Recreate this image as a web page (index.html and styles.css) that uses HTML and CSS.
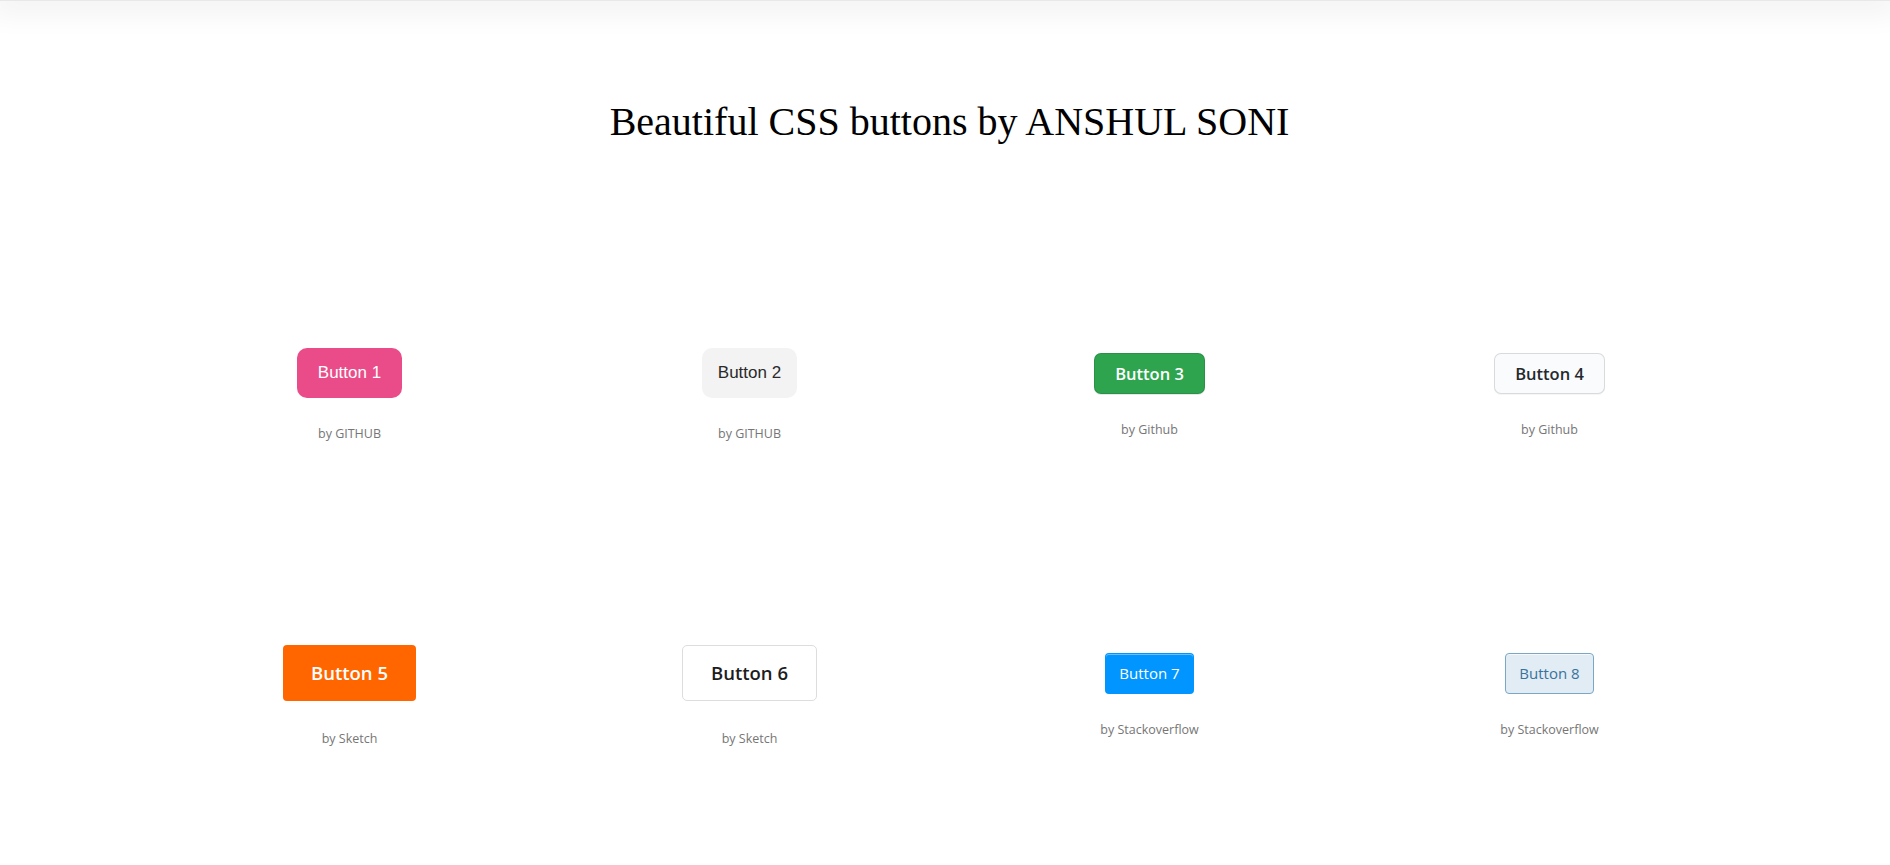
FILE: index.html
```html
<!DOCTYPE html>
<html lang="en">
<head>
<meta charset="utf-8">
<title>Beautiful CSS buttons</title>
<link rel="stylesheet" href="styles.css">
</head>
<body>
<div class="topbar"></div>
<div class="page">
  <h1 class="title">Beautiful CSS buttons by ANSHUL SONI</h1>
  <div class="grid">
    <div class="cell">
      <div class="stage"><button class="btn btn-1">Button 1</button></div>
      <p class="by by-gh-upper">by GITHUB</p>
    </div>
    <div class="cell">
      <div class="stage"><button class="btn btn-2">Button 2</button></div>
      <p class="by by-gh-upper">by GITHUB</p>
    </div>
    <div class="cell">
      <div class="stage"><button class="btn btn-3">Button 3</button></div>
      <p class="by by-gh">by Github</p>
    </div>
    <div class="cell">
      <div class="stage"><button class="btn btn-4">Button 4</button></div>
      <p class="by by-gh">by Github</p>
    </div>
    <div class="cell">
      <div class="stage"><button class="btn btn-5">Button 5</button></div>
      <p class="by by-sketch">by Sketch</p>
    </div>
    <div class="cell">
      <div class="stage"><button class="btn btn-6">Button 6</button></div>
      <p class="by by-sketch">by Sketch</p>
    </div>
    <div class="cell">
      <div class="stage"><button class="btn btn-7">Button 7</button></div>
      <p class="by by-so">by Stackoverflow</p>
    </div>
    <div class="cell">
      <div class="stage"><button class="btn btn-8">Button 8</button></div>
      <p class="by by-so">by Stackoverflow</p>
    </div>
  </div>
</div>
</body>
</html>
```
FILE: styles.css
```css
* { box-sizing: border-box; }

html, body {
  margin: 0;
  padding: 0;
  background: #ffffff;
}

.topbar {
  height: 1px;
  background: #e8e8e8;
  box-shadow: 0 0 30px 10px rgba(0, 0, 0, 0.07);
}

.page {
  padding-left: 9px;
}

.title {
  margin: 99px 0 0;
  font-family: "Liberation Serif", "Times New Roman", serif;
  font-weight: 400;
  font-size: 40px;
  line-height: 44px;
  text-align: center;
  color: #000;
}

.grid {
  display: grid;
  grid-template-columns: repeat(4, 400px);
  grid-template-rows: 300px auto;
  justify-content: center;
  margin-top: 199px;
}

.cell {
  display: flex;
  flex-direction: column;
  align-items: center;
}

.stage {
  height: 60px;
  display: flex;
  align-items: center;
  justify-content: center;
}

.by {
  margin: 0;
  font-family: "Open Sans", "Noto Sans", sans-serif;
  font-size: 12.5px;
  line-height: 20px;
  color: #767676;
}

.by-gh-upper { margin-top: 21px; }
.by-gh { margin-top: 17px; }
.by-sketch { margin-top: 26px; }
.by-so { margin-top: 17px; }

.btn {
  margin: 0;
  border: 0;
  cursor: pointer;
  display: inline-block;
  white-space: nowrap;
}

/* Dribbble-ish pink */
.btn-1 {
  background: #ea4c89;
  color: #ffffff;
  font-family: "Liberation Sans", Arial, sans-serif;
  font-size: 17px;
  line-height: 26px;
  padding: 12px 21px;
  border-radius: 10px;
}

.btn-2 {
  background: #f3f3f4;
  color: #2a2a2a;
  font-family: "Liberation Sans", Arial, sans-serif;
  font-size: 17px;
  line-height: 26px;
  padding: 12px 16px;
  border-radius: 10px;
}

/* GitHub primary */
.btn-3 {
  background: #2ea44f;
  color: #ffffff;
  border: 1px solid rgba(27, 31, 35, 0.15);
  font-family: "Open Sans", "Noto Sans", sans-serif;
  font-weight: 600;
  font-size: 16.5px;
  line-height: 25px;
  padding: 7px 20px;
  border-radius: 7px;
  box-shadow: 0 1px 0 rgba(27, 31, 35, 0.1);
}

/* GitHub secondary */
.btn-4 {
  background: #fafbfc;
  color: #24292e;
  border: 1px solid rgba(27, 31, 35, 0.15);
  font-family: "Open Sans", "Noto Sans", sans-serif;
  font-weight: 600;
  font-size: 16.5px;
  line-height: 25px;
  padding: 7px 20px;
  border-radius: 7px;
  box-shadow: 0 1px 0 rgba(27, 31, 35, 0.04);
}

/* Sketch */
.btn-5 {
  background: #ff6600;
  color: #ffffff;
  font-family: "Open Sans", "Noto Sans", sans-serif;
  font-weight: 600;
  font-size: 18.5px;
  line-height: 26px;
  padding: 15px 28px;
  border-radius: 4px;
}

.btn-6 {
  background: #ffffff;
  color: #1d1d1f;
  border: 1px solid #dddddd;
  font-family: "Open Sans", "Noto Sans", sans-serif;
  font-weight: 600;
  font-size: 18.5px;
  line-height: 26px;
  padding: 14px 28px;
  border-radius: 5px;
}

/* Stack Overflow */
.btn-7 {
  background: #0095ff;
  color: #ffffff;
  border: 1px solid transparent;
  box-shadow: inset 0 1px 0 0 rgba(255, 255, 255, 0.4);
  font-family: "Open Sans", "Noto Sans", sans-serif;
  font-weight: 400;
  font-size: 15px;
  line-height: 19px;
  padding: 10px 13px;
  border-radius: 4px;
}

.btn-8 {
  background: #e1ecf4;
  color: #39739d;
  border: 1px solid #7aa7c7;
  box-shadow: inset 0 1px 0 0 rgba(255, 255, 255, 0.7);
  font-family: "Open Sans", "Noto Sans", sans-serif;
  font-weight: 400;
  font-size: 15px;
  line-height: 19px;
  padding: 10px 13px;
  border-radius: 4px;
}
```
